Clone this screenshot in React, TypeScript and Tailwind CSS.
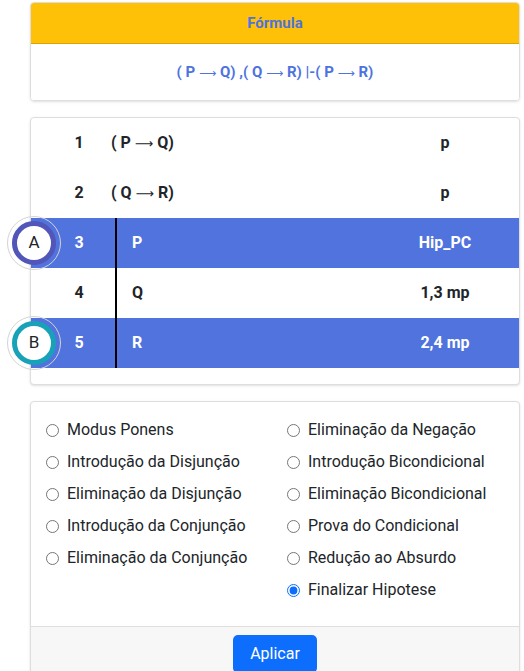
import React from "react";

interface Line {
  n: number;
  formula: string;
  rule: string;
  hyp?: boolean;
  active?: boolean;
  badge?: { letter: string; color: string };
}

const lines: Line[] = [
  { n: 1, formula: "( P → Q)", rule: "p" },
  { n: 2, formula: "( Q → R)", rule: "p" },
  { n: 3, formula: "P", rule: "Hip_PC", hyp: true, active: true, badge: { letter: "A", color: "border-[#5256b8]" } },
  { n: 4, formula: "Q", rule: "1,3 mp", hyp: true },
  { n: 5, formula: "R", rule: "2,4 mp", hyp: true, active: true, badge: { letter: "B", color: "border-[#17a2b8]" } },
];

const leftRules = [
  "Modus Ponens",
  "Introdução da Disjunção",
  "Eliminação da Disjunção",
  "Introdução da Conjunção",
  "Eliminação da Conjunção",
];

const rightRules = [
  "Eliminação da Negação",
  "Introdução Bicondicional",
  "Eliminação Bicondicional",
  "Prova do Condicional",
  "Redução ao Absurdo",
  "Finalizar Hipotese",
];

// Roboto's arrow is tiny, the long one reads like the original
function Formula({ text }: { text: string }) {
  return (
    <span>
      {text.split("→").map((part, i) => (
        <React.Fragment key={i}>
          {i > 0 && (
            <span className="font-['DejaVu_Sans',sans-serif] font-normal text-[0.8em]">⟶</span>
          )}
          {part}
        </React.Fragment>
      ))}
    </span>
  );
}

function RuleOption({ label, checked }: { label: string; checked?: boolean }) {
  return (
    <label className="flex items-center gap-2 h-[32px] text-[16px] text-[#212529]">
      <input
        type="radio"
        name="rule"
        defaultChecked={checked}
        className="w-[13px] h-[13px] accent-[#0d6efd]"
      />
      <span>{label}</span>
    </label>
  );
}

export default function App() {
  return (
    <div className="min-h-screen bg-white pl-[30px] pr-[4px] pt-[2px] font-['Roboto',sans-serif]">
      {/* Formula */}
      <div className="border border-[#dedede] rounded-[4px] shadow-sm overflow-hidden">
        <div className="h-[41px] bg-[#ffc107] border-b border-[#d9a406] flex items-center justify-center font-bold text-[15px] text-[#4e73df]">
          Fórmula
        </div>
        <div className="h-[56px] bg-white flex items-center justify-center font-bold text-[15px] text-[#4e73df]">
          <Formula text="( P → Q) ,( Q → R) |-( P → R)" />
        </div>
      </div>

      {/* Proof lines */}
      <div className="mt-[16px] border border-[#dedede] rounded-[4px] shadow-sm bg-white pb-[16px]">
        {lines.map((l) => (
          <div
            key={l.n}
            className={`relative h-[50px] flex items-center font-bold text-[16px] ${
              l.active ? "bg-[#5073dd] text-white" : "text-[#212529]"
            }`}
          >
            {l.badge && (
              <div className="absolute left-[-24px] top-1/2 -translate-y-1/2 w-[54px] h-[54px] rounded-full border border-[#d4d4d4] flex items-center justify-center">
                <div
                  className={`w-[44px] h-[44px] rounded-full border-[5px] ${l.badge.color} bg-white flex items-center justify-center font-normal text-[17px] text-[#212529]`}
                >
                  {l.badge.letter}
                </div>
              </div>
            )}
            <div className="w-[80px] pl-[16px] text-center">{l.n}</div>
            <div className="flex-1 h-full flex items-center">
              {l.hyp ? (
                <>
                  <div className="ml-[4px] w-[2px] h-full bg-black" />
                  <span className="pl-[15px]">{l.formula}</span>
                </>
              ) : (
                <Formula text={l.formula} />
              )}
            </div>
            <div className="w-[148px] text-center">{l.rule}</div>
          </div>
        ))}
      </div>

      {/* Rules */}
      <div className="mt-[16px] border border-[#dedede] rounded-[4px] shadow-sm bg-white overflow-hidden">
        <div className="grid grid-cols-[241px_1fr] pl-[15px] pt-[12px] pb-[20px]">
          <div className="flex flex-col">
            {leftRules.map((r) => (
              <RuleOption key={r} label={r} />
            ))}
          </div>
          <div className="flex flex-col">
            {rightRules.map((r) => (
              <RuleOption key={r} label={r} checked={r === "Finalizar Hipotese"} />
            ))}
          </div>
        </div>
        <div className="bg-[#f7f7f7] border-t border-[#dedede] pt-[8px] pb-[8px] flex justify-center">
          <button className="h-[38px] px-[17px] rounded-[5px] bg-[#0d6efd] text-white text-[16px]">
            Aplicar
          </button>
        </div>
      </div>
    </div>
  );
}
